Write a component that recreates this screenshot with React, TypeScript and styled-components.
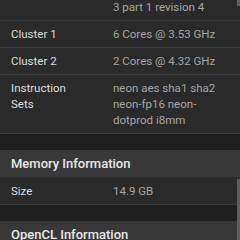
import React from "react";
import styled, { createGlobalStyle } from "styled-components";

const Global = createGlobalStyle`
  html, body { margin: 0; padding: 0; background: #1f1f1f; }
  body { width: 240px; height: 240px; overflow: hidden; font-family: Roboto, "Liberation Sans", sans-serif; }
  * { box-sizing: border-box; }
`;

const Viewport = styled.div`
  position: relative;
  width: 240px;
  height: 240px;
  overflow: hidden;
  background: #1f1f1f;
`;

const Content = styled.div<{ $offset: number }>`
  display: flex;
  flex-direction: column;
  gap: 16px;
  margin-top: ${(p) => -p.$offset}px;
`;

const Card = styled.section`
  display: flex;
  flex-direction: column;
  background: #2a2a2a;
`;

const Header = styled.h2`
  margin: 0;
  height: 28px;
  display: flex;
  align-items: center;
  padding: 0 11px;
  background: #383838;
  color: #e8e8e8;
  font-size: 13px;
  font-weight: 500;
  border-bottom: 1px solid #303030;
`;

const Row = styled.div`
  display: grid;
  grid-template-columns: 102px 1fr;
  padding: 5px 16px 5px 11px;
  border-bottom: 1px solid #3a3a3a;
  font-size: 11.5px;
  line-height: 16px;
`;

const Label = styled.div`
  color: #dedede;
  padding-right: 30px;
`;

const Value = styled.div`
  color: #a6a6a6;
`;

const Line = styled.span`
  display: block;
  white-space: nowrap;
`;

const Thumb = styled.div<{ $top: number; $height: number }>`
  position: absolute;
  right: 0;
  width: 3px;
  top: ${(p) => p.$top}px;
  height: ${(p) => p.$height}px;
  background: #5e5e5e;
`;

type Item = { label: string; value: string | string[] };

const cpu: Item[] = [
  { label: "Processor", value: ["ARM Cortex", "implementer 0x41", "3 part 1 revision 4"] },
  { label: "Cluster 1", value: "6 Cores @ 3.53 GHz" },
  { label: "Cluster 2", value: "2 Cores @ 4.32 GHz" },
  { label: "Instruction Sets", value: "neon aes sha1 sha2 neon-fp16 neon-dotprod i8mm" },
];

const memory: Item[] = [{ label: "Size", value: "14.9 GB" }];

function Rows({ items }: { items: Item[] }) {
  return (
    <>
      {items.map((it) => (
        <Row key={it.label}>
          <Label>{it.label}</Label>
          <Value>
            {Array.isArray(it.value) ? it.value.map((l) => <Line key={l}>{l}</Line>) : it.value}
          </Value>
        </Row>
      ))}
    </>
  );
}

export default function App() {
  return (
    <Viewport>
      <Global />
      <Content $offset={38}>
        <Card>
          <Rows items={cpu} />
        </Card>
        <Card>
          <Header>Memory Information</Header>
          <Rows items={memory} />
        </Card>
        <Card>
          <Header>OpenCL Information</Header>
          <Rows items={[{ label: "Platform", value: "QUALCOMM Snapdragon(TM)" }]} />
        </Card>
      </Content>
      <Thumb $top={-20} $height={26} />
      <Thumb $top={179} $height={61} />
    </Viewport>
  );
}
